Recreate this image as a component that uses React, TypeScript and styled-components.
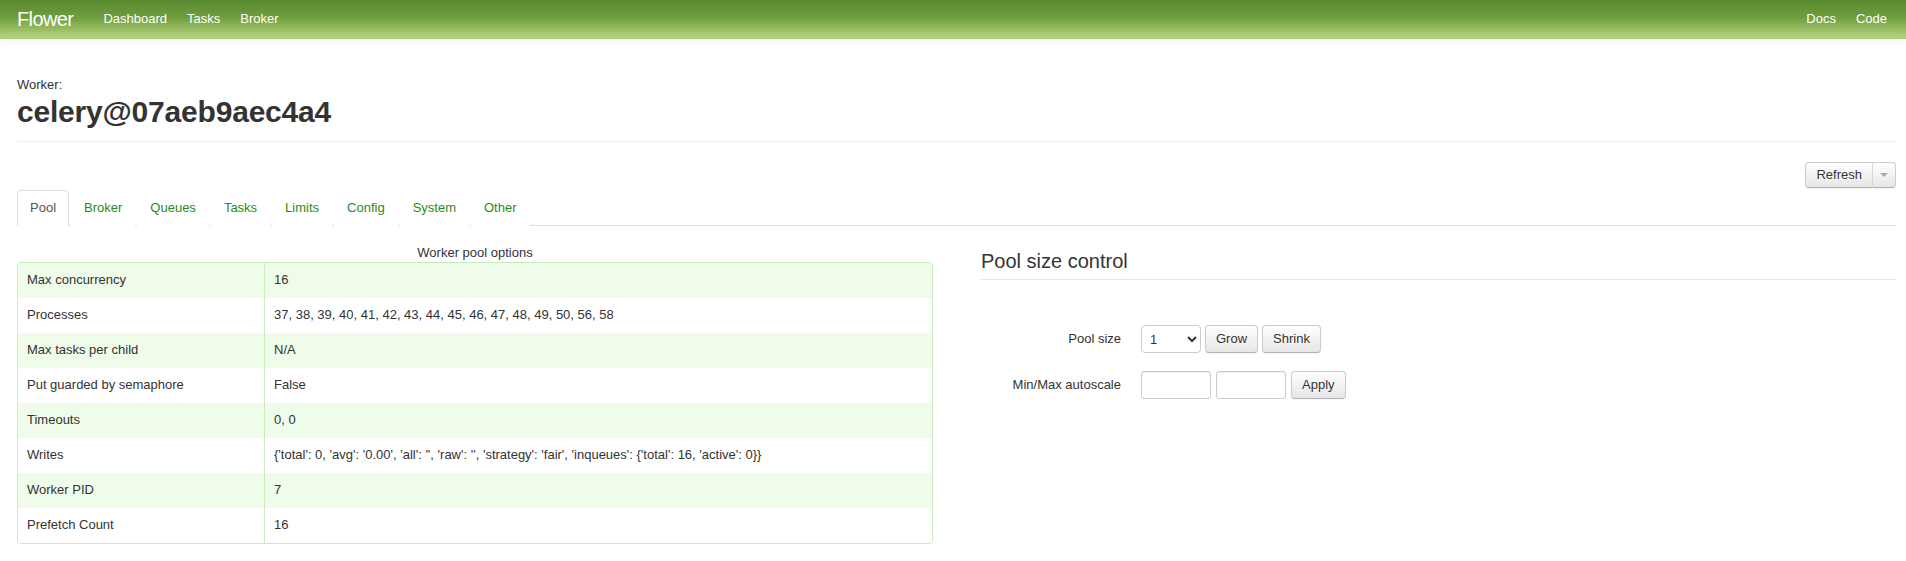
import React from 'react';
import styled, {createGlobalStyle} from 'styled-components';

const GlobalStyle = createGlobalStyle`
  body {
    margin: 0;
    font-family: "Liberation Sans", Helvetica, Arial, sans-serif;
    font-size: 13px;
    line-height: 18px;
    color: #333;
    background: #fff;
  }
`;

const Navbar = styled.div`
  height: 38px;
  display: flex;
  align-items: center;
  padding: 0 9px 0 17px;
  background: linear-gradient(to bottom, #5a8a30 0%, #6f9d3d 45%, #b6d37e 100%);
  border-bottom: 1px solid #a9c773;
  box-shadow: 0 1px 8px rgba(0, 0, 0, 0.08);
`;

const Brand = styled.a`
  color: #fff;
  font-size: 20px;
  font-weight: 300;
  letter-spacing: -0.6px;
  margin-right: 20px;
  line-height: 38px;
`;

const NavList = styled.nav`
  display: flex;
  flex: 1;
`;

const NavLink = styled.a`
  color: #fff;
  font-size: 13px;
  padding: 0 10px;
  line-height: 38px;
  text-decoration: none;
`;

const Container = styled.div`
  padding: 0 10px 0 17px;
`;

const PageHeader = styled.div`
  margin-top: 37px;
  padding-bottom: 11px;
  border-bottom: 1px solid #eee;
`;

const Small = styled.div`
  font-size: 13px;
  line-height: 18px;
`;

const Title = styled.h1`
  margin: 0;
  font-size: 30px;
  line-height: 36px;
  font-weight: bold;
  letter-spacing: -0.2px;
`;

const Toolbar = styled.div`
  display: flex;
  justify-content: flex-end;
  margin-top: 20px;
`;

const BtnGroup = styled.div`
  display: flex;
`;

const Button = styled.button<{ $split?: 'left' | 'right' }>`
  font-family: inherit;
  font-size: 13px;
  line-height: 18px;
  color: #333;
  padding: ${p => (p.$split === 'right' ? '3px 7px' : '4px 10px')};
  border: 1px solid #ccc;
  border-bottom-color: #b3b3b3;
  border-radius: ${p =>
    p.$split === 'left' ? '4px 0 0 4px' : p.$split === 'right' ? '0 4px 4px 0' : '4px'};
  ${p => p.$split === 'right' && 'border-left: 1px solid #d7d7d7;'}
  ${p => p.$split === 'left' && 'padding: 3px 10px; border-right: none;'}
  background: linear-gradient(to bottom, #fff, #e6e6e6);
  text-shadow: 0 1px 1px rgba(255, 255, 255, 0.75);
  box-shadow: inset 0 1px 0 rgba(255, 255, 255, 0.2), 0 1px 2px rgba(0, 0, 0, 0.05);
  cursor: pointer;
  display: inline-flex;
  align-items: center;
`;

const Caret = styled.span`
  display: inline-block;
  width: 0;
  height: 0;
  border-top: 4px solid #aaa;
  border-left: 4px solid transparent;
  border-right: 4px solid transparent;
`;

const Tabs = styled.ul`
  list-style: none;
  display: flex;
  margin: 2px 0 0;
  padding: 0;
  border-bottom: 1px solid #ddd;
`;

const Tab = styled.li<{ $active?: boolean }>`
  margin-right: 2px;
  margin-bottom: -1px;
  padding: 7px 12px;
  line-height: 20px;
  font-size: 13px;
  border: 1px solid ${p => (p.$active ? '#ddd' : 'transparent')};
  border-bottom-color: ${p => (p.$active ? '#fff' : 'transparent')};
  border-radius: 4px 4px 0 0;
  background: #fff;
  color: ${p => (p.$active ? '#555' : '#2b8a1c')};
  cursor: pointer;
`;

const Columns = styled.div`
  display: grid;
  grid-template-columns: 916px 1fr;
  column-gap: 48px;
  margin-top: 18px;
`;

const Caption = styled.div`
  text-align: center;
  line-height: 18px;
`;

const Table = styled.table`
  width: 100%;
  border-collapse: separate;
  border-spacing: 0;
  border: 1px solid #c9ebbe;
  border-radius: 4px;
  overflow: hidden;
`;

const Row = styled.tr<{ $odd?: boolean }>`
  background: ${p => (p.$odd ? '#effcea' : '#fff')};
  & + & td {
    border-top: 1px solid #c9ebbe;
  }
`;

const Cell = styled.td`
  padding: 7px 9px 9px;
  line-height: 19px;
  vertical-align: top;
  &:first-child {
    width: 228px;
  }
  & + & {
    border-left: 1px solid #c9ebbe;
  }
`;

const Legend = styled.div`
  font-size: 20px;
  line-height: 35px;
  color: #333;
  border-bottom: 1px solid #e5e5e5;
`;

const Form = styled.div`
  margin-top: 45px;
  display: flex;
  flex-direction: column;
  gap: 18px;
`;

const FormRow = styled.div`
  display: flex;
  align-items: center;
`;

const Label = styled.label`
  width: 140px;
  margin-right: 20px;
  text-align: right;
  line-height: 28px;
`;

const Controls = styled.div`
  display: flex;
  align-items: center;
  gap: 4px;
`;

const Select = styled.select`
  width: 60px;
  height: 28px;
  font-family: inherit;
  font-size: 13px;
  color: #333;
  border: 1px solid #ccc;
  border-radius: 4px;
  background: #fff;
  padding: 0 4px;
`;

const Input = styled.input`
  width: 70px;
  height: 28px;
  box-sizing: border-box;
  border: 1px solid #ccc;
  border-radius: 3px;
  box-shadow: inset 0 1px 1px rgba(0, 0, 0, 0.075);
  margin-right: 1px;
`;

const rows: [string, string][] = [
    ['Max concurrency', '16'],
    ['Processes', '37, 38, 39, 40, 41, 42, 43, 44, 45, 46, 47, 48, 49, 50, 56, 58'],
    ['Max tasks per child', 'N/A'],
    ['Put guarded by semaphore', 'False'],
    ['Timeouts', '0, 0'],
    ['Writes', "{'total': 0, 'avg': '0.00', 'all': '', 'raw': '', 'strategy': 'fair', 'inqueues': {'total': 16, 'active': 0}}"],
    ['Worker PID', '7'],
    ['Prefetch Count', '16'],
];

const tabs = ['Pool', 'Broker', 'Queues', 'Tasks', 'Limits', 'Config', 'System', 'Other'];

const App: React.FC = () => {
    return (
        <>
            <GlobalStyle/>
            <Navbar>
                <Brand>Flower</Brand>
                <NavList>
                    <NavLink>Dashboard</NavLink>
                    <NavLink>Tasks</NavLink>
                    <NavLink>Broker</NavLink>
                </NavList>
                <NavLink>Docs</NavLink>
                <NavLink>Code</NavLink>
            </Navbar>
            <Container>
                <PageHeader>
                    <Small>Worker:</Small>
                    <Title>celery@07aeb9aec4a4</Title>
                </PageHeader>
                <Toolbar>
                    <BtnGroup>
                        <Button $split="left">Refresh</Button>
                        <Button $split="right"><Caret/></Button>
                    </BtnGroup>
                </Toolbar>
                <Tabs>
                    {tabs.map((t, i) => (
                        <Tab key={t} $active={i === 0}>{t}</Tab>
                    ))}
                </Tabs>
                <Columns>
                    <div>
                        <Caption>Worker pool options</Caption>
                        <Table>
                            <tbody>
                            {rows.map(([k, v], i) => (
                                <Row key={k} $odd={i % 2 === 0}>
                                    <Cell>{k}</Cell>
                                    <Cell>{v}</Cell>
                                </Row>
                            ))}
                            </tbody>
                        </Table>
                    </div>
                    <div>
                        <Legend>Pool size control</Legend>
                        <Form>
                            <FormRow>
                                <Label>Pool size</Label>
                                <Controls>
                                    <Select defaultValue="1">
                                        <option>1</option>
                                    </Select>
                                    <Button>Grow</Button>
                                    <Button>Shrink</Button>
                                </Controls>
                            </FormRow>
                            <FormRow>
                                <Label>Min/Max autoscale</Label>
                                <Controls>
                                    <Input type="text"/>
                                    <Input type="text"/>
                                    <Button>Apply</Button>
                                </Controls>
                            </FormRow>
                        </Form>
                    </div>
                </Columns>
            </Container>
        </>
    );
};

export default App;
